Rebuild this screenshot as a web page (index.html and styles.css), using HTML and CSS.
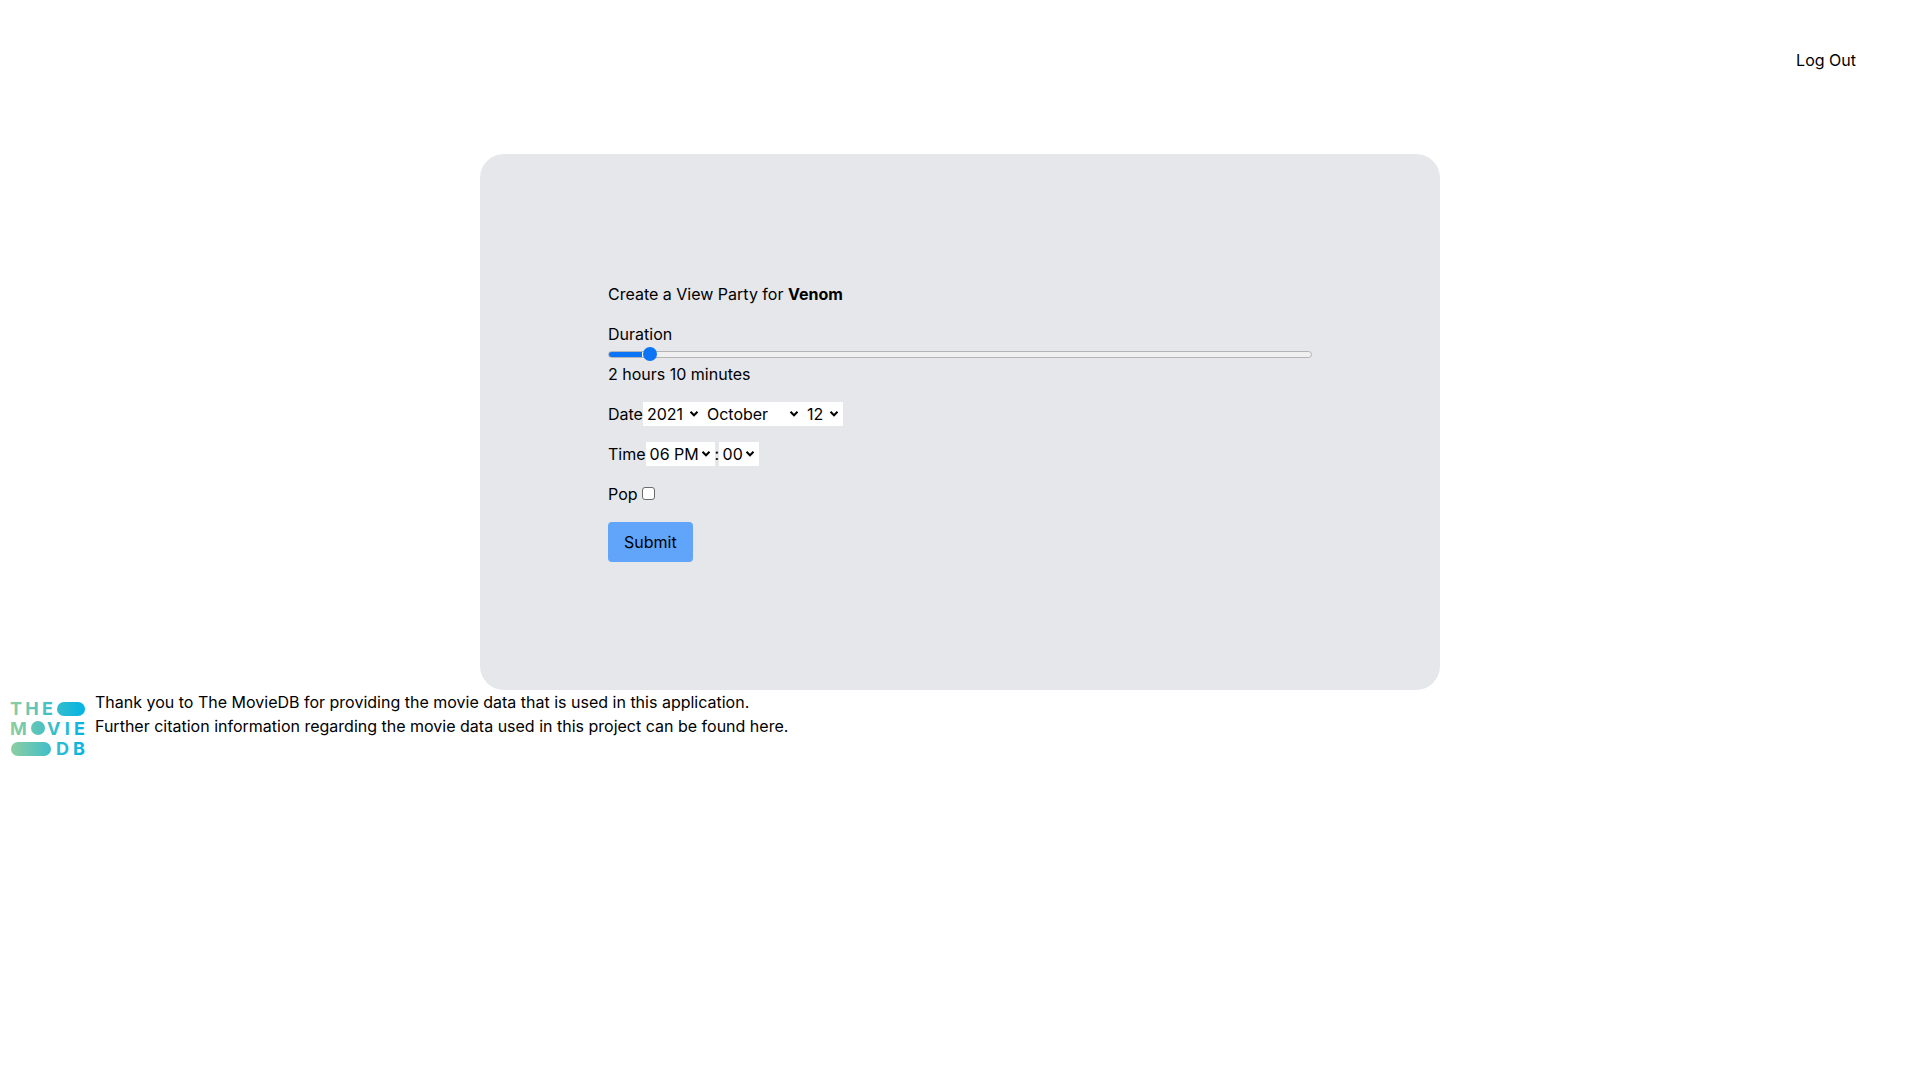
FILE: index.html
```html
<!DOCTYPE html>
<html lang="en">
<head>
  <meta charset="UTF-8">
  <title>Create a View Party</title>
  <link rel="stylesheet" href="styles.css">
</head>
<body>

  <header class="topbar">
    <a href="#" class="logout">Log Out</a>
  </header>

  <main class="panel">
    <form class="party-form">
      <p class="field">Create a View Party for <b>Venom</b></p>

      <div class="field">
        <label for="duration">Duration</label>
        <input type="range" class="duration" id="duration" min="0" max="100" value="5">
        <div>2 hours 10 minutes</div>
      </div>

      <div class="field inline">
        <label>Date</label>
        <select class="sel-year"><option>2021</option></select>
        <select class="sel-month"><option>October</option></select>
        <select class="sel-day"><option>12</option></select>
      </div>

      <div class="field inline">
        <label>Time</label>
        <select class="sel-hour"><option>06 PM</option></select>
        <span class="colon">:</span>
        <select class="sel-min"><option>00</option></select>
      </div>

      <div class="field inline">
        <label for="pop">Pop</label>
        <input type="checkbox" class="check" id="pop">
      </div>

      <button type="button" class="submit">Submit</button>
    </form>
  </main>

  <footer class="credits">
    <svg class="tmdb" viewBox="0 0 80 58" width="80" height="58">
      <defs>
        <linearGradient id="tmdb-grad" gradientUnits="userSpaceOnUse" x1="2" y1="0" x2="78" y2="0">
          <stop offset="0" stop-color="#90cea1"/>
          <stop offset=".56" stop-color="#3cbec9"/>
          <stop offset="1" stop-color="#00b3e5"/>
        </linearGradient>
      </defs>
      <g fill="url(#tmdb-grad)" font-family="Inter, sans-serif" font-weight="700" font-size="18">
        <text x="2" y="16" textLength="43">THE</text>
        <rect x="49" y="3" width="28" height="14" rx="7"/>
        <text x="2" y="36">M</text>
        <circle cx="30" cy="29" r="7"/>
        <text x="39" y="36" textLength="38">VIE</text>
        <rect x="3" y="43" width="40" height="14" rx="7"/>
        <text x="48" y="56" textLength="29">DB</text>
      </g>
    </svg>
    <div class="credits-text">
      <div>Thank you to The MovieDB for providing the movie data that is used in this application.</div>
      <div>Further citation information regarding the movie data used in this project can be found here.</div>
    </div>
  </footer>

</body>
</html>
```

FILE: styles.css
```css
* { box-sizing: border-box; margin: 0; padding: 0; }

body {
  background: #fff;
  color: #000;
  font-family: Inter, "Liberation Sans", sans-serif;
  font-size: 16px;
  line-height: 24px;
}

a { color: inherit; text-decoration: none; }

.topbar {
  display: flex;
  justify-content: flex-end;
  align-items: center;
  height: 120px;
  padding: 0 64px 0 0;
}

.panel {
  width: 960px;
  margin: 34px auto 0;
  padding: 128px;
  background: #e5e7eb;
  border-radius: 24px;
}

.field { margin-bottom: 16px; }
.inline { display: flex; align-items: center; height: 24px; }

.duration {
  display: block;
  width: 100%;
  height: 16px;
  appearance: none;
  background: transparent;
}
.duration::-webkit-slider-runnable-track {
  height: 7px;
  border: 1px solid #b4b4b4;
  border-radius: 4px;
  background: linear-gradient(to right, #0b75f5 33px, #efefef 33px);
}
.duration::-webkit-slider-thumb {
  appearance: none;
  width: 14px;
  height: 14px;
  margin-top: -4.5px;
  border-radius: 50%;
  background: #0b75f5;
}

select {
  height: 24px;
  padding-left: 4px;
  border: 0;
  border-radius: 0;
  appearance: none;
  font: inherit;
  color: #000;
  background: #fff url("data:image/svg+xml,%3Csvg xmlns='http://www.w3.org/2000/svg' width='10' height='8'%3E%3Cpath d='M1.5 1.8 5 5.3l3.5-3.5' fill='none' stroke='%23000' stroke-width='2'/%3E%3C/svg%3E") no-repeat right 4px center;
}
.sel-year { width: 60px; }
.sel-month { width: 100px; }
.sel-day { width: 40px; }
.sel-hour { width: 69px; }
.sel-min { width: 40px; }
.colon { width: 4px; }

.check {
  appearance: none;
  width: 13px;
  height: 13px;
  margin: 0 0 1px 4px;
  background: #fff;
  border: 1px solid #6b6b6b;
  border-radius: 3px;
}

.submit {
  display: block;
  height: 40px;
  padding: 0 16px;
  border: 0;
  border-radius: 4px;
  background: #60a5fa;
  color: #000;
  font: inherit;
}

.credits {
  display: flex;
  align-items: flex-start;
  gap: 7px;
  padding: 0 8px;
}
.tmdb { margin-top: 9px; flex-shrink: 0; }
</style>
```
